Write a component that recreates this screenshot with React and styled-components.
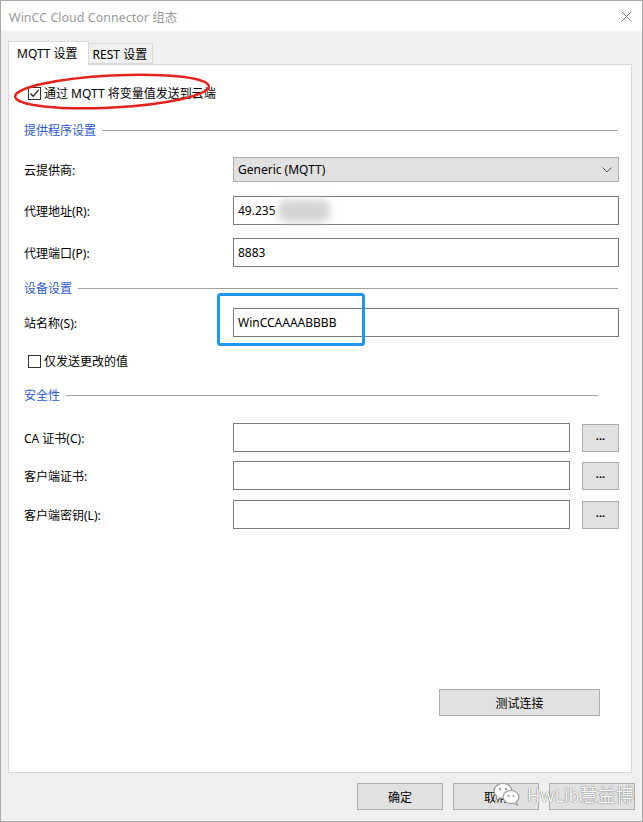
import React from 'react'
import styled, { createGlobalStyle } from 'styled-components'

const GlobalStyle = createGlobalStyle`
  html, body {
    margin: 0;
    padding: 0;
    background: #fff;
  }
  #root {
    width: 643px;
    height: 822px;
  }
`

const Window = styled.div`
  position: relative;
  box-sizing: border-box;
  width: 643px;
  height: 822px;
  display: flex;
  flex-direction: column;
  border: 1px solid #a9a9a9;
  background: #f0f0f0;
  font-family: "Noto Sans", "Noto Sans CJK SC", sans-serif;
  font-size: 12px;
  color: #000;
`

const TitleBar = styled.div`
  height: 30px;
  flex: none;
  display: flex;
  align-items: center;
  justify-content: space-between;
  padding: 0 10px 0 8px;
  background: #fff;
  color: #9a9a9a;
  font-size: 12.5px;
`

const Body = styled.div`
  flex: none;
  padding: 9px 10px 0 7px;
`

const TabStrip = styled.div`
  display: flex;
  align-items: flex-end;
  height: 24px;
`

const Tab = styled.div`
  position: relative;
  box-sizing: border-box;
  display: flex;
  align-items: center;
  height: ${ ({ active }) => active ? '24px' : '21px' };
  padding: ${ ({ active }) => active ? '0 10px 2px 8px' : '0 5px 0 4px' };
  margin-bottom: ${ ({ active }) => active ? '-1px' : '0' };
  z-index: ${ ({ active }) => active ? 1 : 0 };
  background: ${ ({ active }) => active ? '#fff' : '#f0f0f0' };
  border: 1px solid #d9d9d9;
  border-bottom: ${ ({ active }) => active ? 'none' : '1px solid #d9d9d9' };
  margin-left: ${ ({ first }) => first ? '0' : '-1px' };
`

const Panel = styled.div`
  box-sizing: border-box;
  height: 709px;
  padding: 0 12px 0 15px;
  background: #fff;
  border: 1px solid #d9d9d9;
  display: flex;
  flex-direction: column;
`

const CheckRow = styled.label`
  display: flex;
  align-items: center;
  height: 16px;
  margin-top: ${ ({ top }) => top }px;
  padding-left: 4px;
  gap: 3px;
`

const Box = styled.span`
  box-sizing: border-box;
  width: 13px;
  height: 13px;
  border: 1px solid #333;
  background: #fff;
  display: flex;
  align-items: center;
  justify-content: center;
`

const SectionHead = styled.div`
  display: flex;
  align-items: center;
  height: 16px;
  margin-top: ${ ({ top }) => top }px;
  margin-right: ${ ({ short }) => short ? '21px' : '1px' };
  color: #2b5ad3;
  gap: 6px;

  &::after {
    content: '';
    flex: 1;
    height: 1px;
    background: #a0a0a0;
  }
`

const Row = styled.div`
  display: flex;
  align-items: center;
  height: ${ ({ h }) => h || 29 }px;
  margin-top: ${ ({ top }) => top }px;
`

const Label = styled.div`
  width: 209px;
  flex: none;
`

const TextBox = styled.div`
  box-sizing: border-box;
  flex: 1;
  height: 100%;
  display: flex;
  align-items: center;
  padding-left: 4px;
  border: 1px solid #7a7a7a;
  background: #fff;
`

const Select = styled(TextBox)`
  justify-content: space-between;
  padding-right: 6px;
  border-color: #adadad;
  background: #e1e1e1;
`

const Blur = styled.span`
  display: inline-block;
  width: 52px;
  height: 22px;
  margin-left: 2px;
  background: #d4d4d4;
  border-radius: 8px;
  filter: blur(4px);
`

const Button = styled.div`
  box-sizing: border-box;
  flex: none;
  display: flex;
  align-items: center;
  justify-content: center;
  width: ${ ({ w }) => w }px;
  height: ${ ({ h }) => h || 27 }px;
  border: 1px solid #adadad;
  background: #e1e1e1;
`

const BrowseButton = styled(Button)`
  margin-left: 12px;
  font-weight: bold;
  font-size: 11px;
  padding-bottom: 4px;
`

const TestRow = styled.div`
  display: flex;
  justify-content: flex-end;
  margin-top: 160px;
  padding-right: 19px;
`

const Footer = styled.div`
  flex: 1;
  display: flex;
  justify-content: flex-end;
  gap: 10px;
  padding: 10px 7px 0 0;
`

const Overlay = styled.svg`
  position: absolute;
  left: -1px;
  top: -1px;
  pointer-events: none;
`

const Watermark = styled.div`
  position: absolute;
  left: 492px;
  top: 780px;
  display: flex;
  align-items: center;
  gap: 6px;
  font-family: "Noto Sans", "Noto Sans CJK SC", sans-serif;
  font-size: 18px;
  color: #f8f8f8;
  text-shadow: 0 0 1px #666, 0 0 1px #888;
`

const Close = () => (
  <svg width='11' height='11' viewBox='0 0 11 11'>
    <path d='M0.5 0.5 L10.5 10.5 M10.5 0.5 L0.5 10.5' stroke='#777' strokeWidth='1' />
  </svg>
)

const Tick = () => (
  <svg width='11' height='11' viewBox='0 0 11 11'>
    <path d='M1.5 5.5 L4.2 8.3 L9.6 1.8' fill='none' stroke='#222' strokeWidth='1.3' />
  </svg>
)

const Chevron = () => (
  <svg width='10' height='6' viewBox='0 0 10 6'>
    <path d='M0.5 0.5 L5 5 L9.5 0.5' fill='none' stroke='#555' strokeWidth='1' />
  </svg>
)

const WeChat = () => (
  <svg width='28' height='24' viewBox='0 0 28 24'>
    <ellipse cx='10' cy='9' rx='9' ry='7.5' fill='#fff' stroke='#999' strokeWidth='1.2' />
    <path d='M4 14 L3 18 L8 15.5' fill='#fff' stroke='#999' strokeWidth='1.2' />
    <ellipse cx='18' cy='15' rx='8' ry='6.5' fill='#fff' stroke='#999' strokeWidth='1.2' />
    <path d='M23 19.5 L24.5 23 L20 21' fill='#fff' stroke='#999' strokeWidth='1.2' />
    <circle cx='7' cy='7' r='1.2' fill='#999' />
    <circle cx='13' cy='7' r='1.2' fill='#999' />
    <circle cx='15.5' cy='14' r='1' fill='#999' />
    <circle cx='20.5' cy='14' r='1' fill='#999' />
  </svg>
)

const FieldRow = ({ label, top, value, browse, children }) => (
  <Row top={ top }>
    <Label>{ label }</Label>
    <TextBox>{ value }{ children }</TextBox>
    { browse && <BrowseButton w={ 37 } h={ 28 }>...</BrowseButton> }
  </Row>
)

const App = () => (
  <Window>
    <GlobalStyle />
    <TitleBar>
      <span>WinCC Cloud Connector 组态</span>
      <Close />
    </TitleBar>
    <Body>
      <TabStrip>
        <Tab active first>MQTT 设置</Tab>
        <Tab>REST 设置</Tab>
      </TabStrip>
      <Panel>
        <CheckRow top={ 20 }>
          <Box><Tick /></Box>
          通过 MQTT 将变量值发送到云端
        </CheckRow>

        <SectionHead top={ 21 }>提供程序设置</SectionHead>
        <Row top={ 19 } h={ 25 }>
          <Label>云提供商:</Label>
          <Select>
            Generic (MQTT)
            <Chevron />
          </Select>
        </Row>
        <FieldRow label='代理地址(R):' top={ 14 } value='49.235'>
          <Blur />
        </FieldRow>
        <FieldRow label='代理端口(P):' top={ 13 } value='8883' />

        <SectionHead top={ 13 }>设备设置</SectionHead>
        <FieldRow label='站名称(S):' top={ 12 } value='WinCCAAAABBBB' />
        <CheckRow top={ 16 }>
          <Box />
          仅发送更改的值
        </CheckRow>

        <SectionHead top={ 18 } short>安全性</SectionHead>
        <FieldRow label='CA 证书(C):' top={ 20 } browse />
        <FieldRow label='客户端证书:' top={ 9 } browse />
        <FieldRow label='客户端密钥(L):' top={ 10 } browse />

        <TestRow>
          <Button w={ 161 }>测试连接</Button>
        </TestRow>
      </Panel>
    </Body>
    <Footer>
      <Button w={ 86 }>确定</Button>
      <Button w={ 86 }>取消</Button>
      <Button w={ 86 } />
    </Footer>

    <Overlay width='643' height='822' viewBox='0 0 643 822'>
      <ellipse cx='112' cy='91.5' rx='97' ry='16' fill='none'
        stroke='#e5231d' strokeWidth='2.5' transform='rotate(-3 112 91.5)' />
      <rect x='218.5' y='294.5' width='145' height='50' rx='2' fill='none'
        stroke='#2196f3' strokeWidth='3' />
    </Overlay>
    <Watermark>
      <WeChat />
      HwLib慧益博
    </Watermark>
  </Window>
)

export default App
